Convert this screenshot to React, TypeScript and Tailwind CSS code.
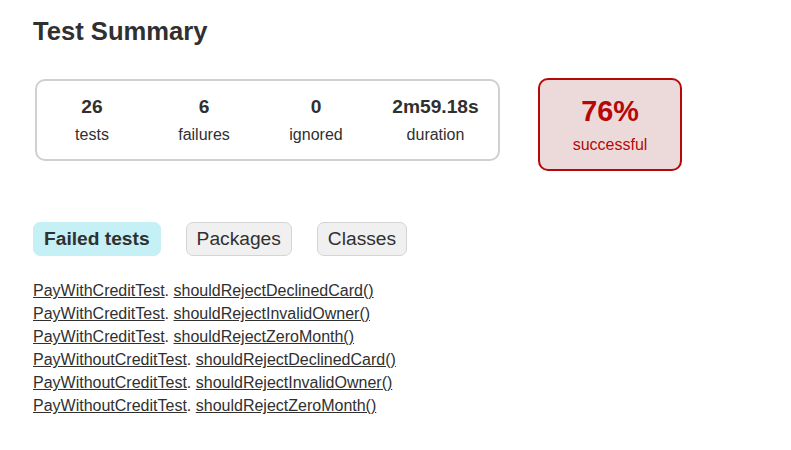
import React from 'react';

const counters = [
  { value: '26', label: 'tests', width: 'w-[110px]' },
  { value: '6', label: 'failures', width: 'w-[110px]' },
  { value: '0', label: 'ignored', width: 'w-[110px]' },
  { value: '2m59.18s', label: 'duration', width: 'w-[125px]' },
];

const failed = [
  ['PayWithCreditTest', 'shouldRejectDeclinedCard()'],
  ['PayWithCreditTest', 'shouldRejectInvalidOwner()'],
  ['PayWithCreditTest', 'shouldRejectZeroMonth()'],
  ['PayWithoutCreditTest', 'shouldRejectDeclinedCard()'],
  ['PayWithoutCreditTest', 'shouldRejectInvalidOwner()'],
  ['PayWithoutCreditTest', 'shouldRejectZeroMonth()'],
];

const App: React.FC = () => {
  return (
    <div className="min-h-[450px] bg-white text-[#303030] text-[16px] font-['Liberation_Sans',Arial,sans-serif]">
      <div className="pl-[33px] pt-[17px]">
        <h1 className="text-[25.6px] leading-[29px] font-bold">Test Summary</h1>

        {/* summary */}
        <div className="flex items-start mt-[32px]">
          <div className="ml-[2px] mt-px flex gap-[2px] border-2 border-[#d0d0d0] rounded-[10px]">
            {counters.map((c) => (
              <div key={c.label} className={`${c.width} py-[15px] text-center`}>
                <p className="text-[19.2px] leading-[22px] font-bold mb-[8px]">{c.value}</p>
                <p className="leading-[18.4px]">{c.label}</p>
              </div>
            ))}
          </div>
          <div className="ml-[38px] w-[144px] py-[15px] text-center border-2 border-[#b60808] bg-[#ecdada] rounded-[10px] text-[#b60808]">
            <p className="text-[28.8px] leading-[33px] font-bold mb-[8px]">76%</p>
            <p className="leading-[18.4px]">successful</p>
          </div>
        </div>

        {/* tabs */}
        <ul className="flex gap-[25px] mt-[51px] text-[19.2px] leading-[22px]">
          <li className="px-[10px] py-[5px] rounded-[7px] border border-[#c5f0f5] bg-[#c5f0f5] font-bold">
            Failed tests
          </li>
          <li className="px-[10px] py-[5px] rounded-[7px] border border-[#d4d4d4] bg-[#f0f0f0]">
            Packages
          </li>
          <li className="px-[10px] py-[5px] rounded-[7px] border border-[#d4d4d4] bg-[#f0f0f0]">
            Classes
          </li>
        </ul>

        {/* failed tests */}
        <ul className="mt-[26px]">
          {failed.map(([cls, method], i) => (
            <li key={i} className="leading-[18.4px] mb-[4.6px]">
              <a href="#" className="underline">{cls}</a>.{' '}
              <a href="#" className="underline">{method}</a>
            </li>
          ))}
        </ul>
      </div>
    </div>
  );
};

export default App;
